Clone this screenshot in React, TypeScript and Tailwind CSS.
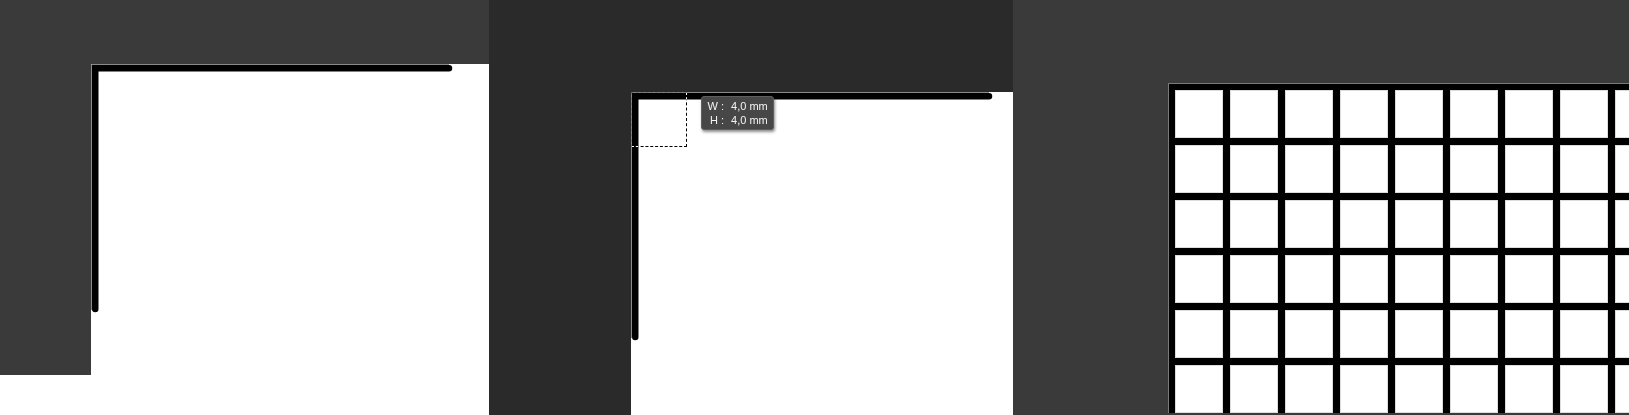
const ROWS = 6;
const COLS = 9;

function CornerStroke() {
  return (
    <svg width="362" height="250" className="block" viewBox="0 0 362 250">
      <path d="M0.5 246 V0.5 H358" fill="none" stroke="#8a8a8a" strokeWidth="1" />
      <path d="M4.25 245 V4.25 H358" fill="none" stroke="#000" strokeWidth="6.5" strokeLinecap="round" strokeLinejoin="miter" />
    </svg>
  );
}

function SizeTip() {
  return (
    <div className="absolute left-[70px] top-[4px] rounded-[3px] border border-[#5e5e5e] bg-[#474747] px-[5px] py-[2px] text-[11px] leading-[14px] text-[#f4f4f4] shadow-[1px_2px_3px_rgba(0,0,0,0.45)] [font-family:'Liberation_Sans',Arial,sans-serif]">
      <div className="grid grid-cols-[11px_auto_auto]">
        <span className="text-right">W</span>
        <span className="ml-[3px]">:</span>
        <span className="ml-[7px]">4,0 mm</span>
        <span className="text-right">H</span>
        <span className="ml-[3px]">:</span>
        <span className="ml-[7px]">4,0 mm</span>
      </div>
    </div>
  );
}

export default function App() {
  return (
    <div className="flex h-[415px] w-[1629px] overflow-hidden bg-white">
      {/* panel 1: corner at normal zoom */}
      <section className="flex w-[489px] shrink-0 flex-col bg-white">
        <div className="h-[64px] shrink-0 bg-[#3a3a3a]" />
        <div className="flex">
          <div className="h-[311px] w-[91px] shrink-0 bg-[#3a3a3a]" />
          <div className="flex-1 bg-white">
            <CornerStroke />
          </div>
        </div>
      </section>

      {/* panel 2: resizing the corner */}
      <section className="flex w-[524px] shrink-0 flex-col bg-[#2a2a2a]">
        <div className="h-[92px] shrink-0" />
        <div className="flex flex-1">
          <div className="w-[142px] shrink-0" />
          <div className="relative flex-1 bg-white">
            <CornerStroke />
            <div className="absolute left-0 top-0 h-[55px] w-[56px] border border-dashed border-white mix-blend-difference" />
            <SizeTip />
          </div>
        </div>
      </section>

      {/* panel 3: repeated into a grid */}
      <section className="flex-1 overflow-hidden bg-[#3a3a3a] pl-[155px] pt-[83px]">
        <div className="inline-grid grid-cols-[repeat(9,48px)] gap-[7px] border-l border-t border-[#7a7a7a] bg-black pl-[6px] pt-[6px]">
          {Array.from({ length: ROWS * COLS }).map((_, i) => (
            <div key={i} className="h-[48px] w-[48px] border border-[#dcdcdc] bg-white" />
          ))}
        </div>
      </section>
    </div>
  );
}
